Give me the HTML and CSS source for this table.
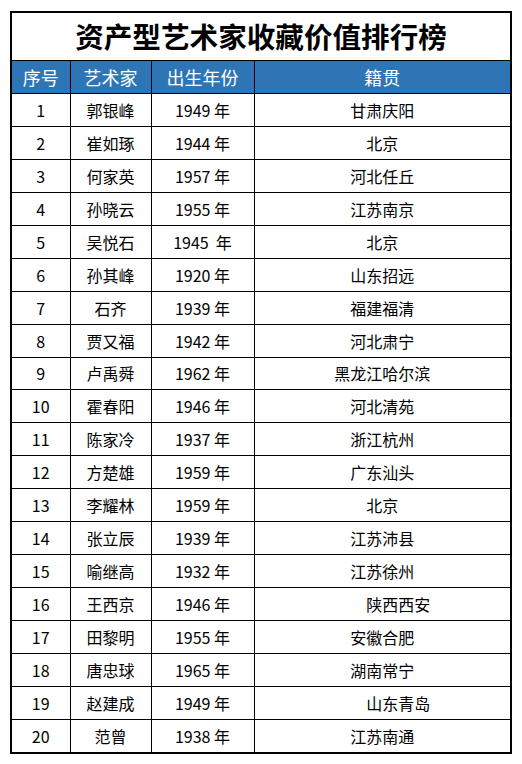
FILE: index.html
```html
<!DOCTYPE html>
<html lang="zh-CN">
<head>
<meta charset="utf-8">
<title>资产型艺术家收藏价值排行榜</title>
<link rel="stylesheet" href="styles.css">
</head>
<body>
<div class="sheet">
<table class="rank">
<colgroup>
<col class="c1"><col class="c2"><col class="c3"><col class="c4">
</colgroup>
<thead>
<tr><th class="title" colspan="4">资产型艺术家收藏价值排行榜</th></tr>
<tr class="head"><th>序号</th><th>艺术家</th><th>出生年份</th><th>籍贯</th></tr>
</thead>
<tbody>
<tr><td>1</td><td>郭银峰</td><td>1949 年</td><td>甘肃庆阳</td></tr>
<tr><td>2</td><td>崔如琢</td><td>1944 年</td><td>北京</td></tr>
<tr><td>3</td><td>何家英</td><td>1957 年</td><td>河北任丘</td></tr>
<tr><td>4</td><td>孙晓云</td><td>1955 年</td><td>江苏南京</td></tr>
<tr><td>5</td><td>吴悦石</td><td>1945&nbsp; 年</td><td>北京</td></tr>
<tr><td>6</td><td>孙其峰</td><td>1920 年</td><td>山东招远</td></tr>
<tr><td>7</td><td>石齐</td><td>1939 年</td><td>福建福清</td></tr>
<tr><td>8</td><td>贾又福</td><td>1942 年</td><td>河北肃宁</td></tr>
<tr><td>9</td><td>卢禹舜</td><td>1962 年</td><td>黑龙江哈尔滨</td></tr>
<tr><td>10</td><td>霍春阳</td><td>1946 年</td><td>河北清苑</td></tr>
<tr><td>11</td><td>陈家冷</td><td>1937 年</td><td>浙江杭州</td></tr>
<tr><td>12</td><td>方楚雄</td><td>1959 年</td><td>广东汕头</td></tr>
<tr><td>13</td><td>李耀林</td><td>1959 年</td><td>北京</td></tr>
<tr><td>14</td><td>张立辰</td><td>1939 年</td><td>江苏沛县</td></tr>
<tr><td>15</td><td>喻继高</td><td>1932 年</td><td>江苏徐州</td></tr>
<tr><td>16</td><td>王西京</td><td>1946 年</td><td class="shift">陕西西安</td></tr>
<tr><td>17</td><td>田黎明</td><td>1955 年</td><td>安徽合肥</td></tr>
<tr><td>18</td><td>唐忠球</td><td>1965 年</td><td>湖南常宁</td></tr>
<tr><td>19</td><td>赵建成</td><td>1949 年</td><td class="shift">山东青岛</td></tr>
<tr><td>20</td><td>范曾</td><td>1938 年</td><td>江苏南通</td></tr>
</tbody>
</table>
</div>
</body>
</html>
```

FILE: styles.css
```css
html, body {
  margin: 0;
  padding: 0;
  background: #ffffff;
}

body {
  font-family: "Noto Sans CJK SC", "Microsoft YaHei", sans-serif;
  color: #000000;
}

.sheet {
  margin: 11px 0 0 10px;
  width: 498px;
  border: 2px solid #000000;
}

.rank {
  width: 498px;
  table-layout: fixed;
  border-collapse: collapse;
  border-style: hidden;
}

.c1 { width: 58px; }
.c2 { width: 81px; }
.c3 { width: 103px; }
.c4 { width: 256px; }

.rank th,
.rank td {
  border: 1px solid #000000;
  padding: 0;
  text-align: center;
  vertical-align: middle;
  white-space: pre;
}

.title {
  height: 47px;
  font-size: 28.6px;
  font-weight: 700;
  line-height: 1;
}

.head th {
  height: 32px;
  background: #2e75b6;
  color: #ffffff;
  font-size: 18px;
  font-weight: 400;
  line-height: 1;
}

.rank td {
  height: 31.95px;
  font-size: 16px;
  line-height: 1;
}

.rank td.shift {
  padding-left: 32px;
}
```
